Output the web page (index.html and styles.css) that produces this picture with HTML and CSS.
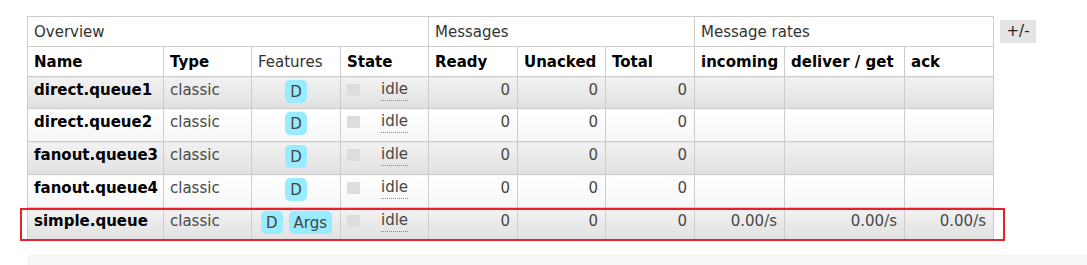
FILE: index.html
```html
<!DOCTYPE html>
<html lang="en">
<head>
<meta charset="utf-8">
<title>Queues</title>
<link rel="stylesheet" href="styles.css">
</head>
<body>
<div class="queues">
  <div class="queues-row">
    <table class="list">
      <colgroup>
        <col class="c-name"><col class="c-type"><col class="c-feat"><col class="c-state">
        <col class="c-ready"><col class="c-unacked"><col class="c-total">
        <col class="c-in"><col class="c-deliver"><col class="c-ack">
      </colgroup>
      <thead>
        <tr class="group">
          <th colspan="4">Overview</th>
          <th colspan="3">Messages</th>
          <th colspan="3">Message rates</th>
        </tr>
        <tr class="cols">
          <th>Name</th><th>Type</th><th class="plain">Features</th><th>State</th>
          <th>Ready</th><th>Unacked</th><th>Total</th>
          <th>incoming</th><th>deliver / get</th><th>ack</th>
        </tr>
      </thead>
      <tbody>
        <tr class="alt1">
          <td class="name">direct.queue1</td><td>classic</td>
          <td class="feat"><span class="tag">D</span></td>
          <td><div class="state"><span class="status"></span><abbr>idle</abbr></div></td>
          <td class="num">0</td><td class="num">0</td><td class="num">0</td>
          <td></td><td></td><td></td>
        </tr>
        <tr class="alt2">
          <td class="name">direct.queue2</td><td>classic</td>
          <td class="feat"><span class="tag">D</span></td>
          <td><div class="state"><span class="status"></span><abbr>idle</abbr></div></td>
          <td class="num">0</td><td class="num">0</td><td class="num">0</td>
          <td></td><td></td><td></td>
        </tr>
        <tr class="alt1">
          <td class="name">fanout.queue3</td><td>classic</td>
          <td class="feat"><span class="tag">D</span></td>
          <td><div class="state"><span class="status"></span><abbr>idle</abbr></div></td>
          <td class="num">0</td><td class="num">0</td><td class="num">0</td>
          <td></td><td></td><td></td>
        </tr>
        <tr class="alt2">
          <td class="name">fanout.queue4</td><td>classic</td>
          <td class="feat"><span class="tag">D</span></td>
          <td><div class="state"><span class="status"></span><abbr>idle</abbr></div></td>
          <td class="num">0</td><td class="num">0</td><td class="num">0</td>
          <td></td><td></td><td></td>
        </tr>
        <tr class="alt1">
          <td class="name">simple.queue</td><td>classic</td>
          <td class="feat"><span class="tag">D</span><span class="tag">Args</span></td>
          <td><div class="state"><span class="status"></span><abbr>idle</abbr></div></td>
          <td class="num">0</td><td class="num">0</td><td class="num">0</td>
          <td class="num">0.00/s</td><td class="num">0.00/s</td><td class="num">0.00/s</td>
        </tr>
      </tbody>
    </table>
    <span class="toggle">+/-</span>
  </div>
  <div class="highlight"></div>
  <div class="section-foot"></div>
</div>
</body>
</html>
```
FILE: styles.css
```css
html, body {
  margin: 0;
  padding: 0;
  background: #fff;
}

body {
  font-family: "DejaVu Sans", Verdana, sans-serif;
  font-size: 15px;
  color: #484848;
  overflow: hidden;
}

.queues {
  position: relative;
  padding: 16px 0 0 27px;
}

.queues-row {
  display: flex;
  align-items: flex-start;
  gap: 6px;
}

table.list {
  border-collapse: collapse;
  table-layout: fixed;
  width: 966px;
}

.c-name { width: 136px; }
.c-type { width: 88px; }
.c-feat { width: 89px; }
.c-state { width: 88px; }
.c-ready { width: 89px; }
.c-unacked { width: 88px; }
.c-total { width: 89px; }
.c-in { width: 90px; }
.c-deliver { width: 120px; }
.c-ack { width: 89px; }

table.list th,
table.list td {
  border: 1px solid #ccc;
  padding: 0 6px;
  text-align: left;
  white-space: nowrap;
  overflow: hidden;
}

table.list th {
  height: 29px;
  color: #000;
  font-weight: bold;
  vertical-align: middle;
}

table.list tr.group th {
  font-weight: normal;
  color: #333;
}

table.list th.plain {
  font-weight: normal;
  color: #333;
}

table.list td {
  vertical-align: top;
  padding-top: 2px;
  padding-bottom: 0;
  line-height: 23px;
  box-sizing: border-box;
}

table.list tbody tr:first-child td {
  height: 32px;
}

table.list tbody tr + tr td {
  height: 33px;
}

table.list tr.alt1 td {
  background: linear-gradient(#f2f2f2, #e0e0e0);
}

table.list tr.alt2 td {
  background: linear-gradient(#fff, #f6f6f6);
}

table.list td.name {
  font-weight: bold;
  color: #000;
}

table.list td.num {
  text-align: right;
  padding-right: 7px;
}

table.list td.feat {
  text-align: center;
  padding-top: 3px;
}

.tag {
  display: inline-block;
  height: 23px;
  line-height: 24px;
  padding: 0 5px;
  margin: 0 3px;
  border-radius: 5px;
  background: #99ebff;
  color: #444;
  vertical-align: top;
}

.state {
  display: flex;
  align-items: flex-start;
  gap: 21px;
}

.status {
  flex: none;
  width: 13px;
  height: 12px;
  margin-top: 5px;
  background: #ddd;
}

.state abbr {
  text-decoration: none;
  border-bottom: 1px dotted #888;
  line-height: 21px;
}

.toggle {
  margin-top: 4px;
  width: 36px;
  height: 23px;
  line-height: 23px;
  text-align: center;
  background: #e4e4e4;
  color: #222;
}

.highlight {
  position: absolute;
  left: 20px;
  top: 208px;
  width: 981px;
  height: 29px;
  border: 2px solid #e8202a;
  pointer-events: none;
}

.section-foot {
  margin: 14px 0 0;
  height: 20px;
  background: #f6f6f6;
}
```
